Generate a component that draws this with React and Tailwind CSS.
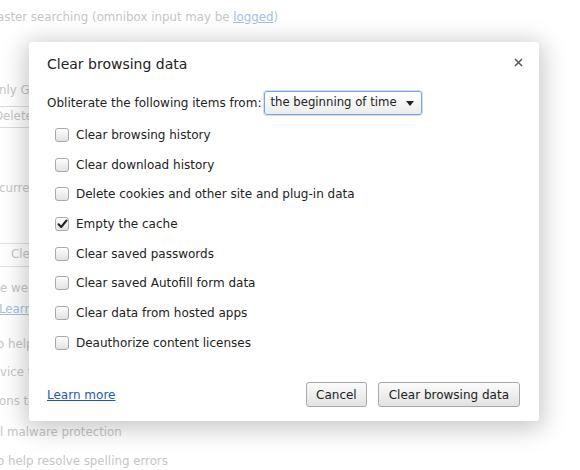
import React from "react";

const font = { fontFamily: '"DejaVu Sans", "Liberation Sans", sans-serif' };

function Checkbox({ checked }) {
  return (
    <span className="relative flex h-[14px] w-[14px] shrink-0 items-center justify-center rounded-[3px] border border-[#a9a9a9] bg-gradient-to-b from-[#fdfdfd] to-[#e2e2e2] shadow-[inset_0_1px_0_#fff]">
      {checked && (
        <svg width="11" height="10" viewBox="0 0 11 10" className="absolute left-[1px] top-[1px]">
          <path d="M1.5 5.2 L4.2 8 L9.5 1.5" fill="none" stroke="#222" strokeWidth="2" strokeLinecap="round" strokeLinejoin="round" />
        </svg>
      )}
    </span>
  );
}

const items = [
  ["Clear browsing history", false],
  ["Clear download history", false],
  ["Delete cookies and other site and plug-in data", false],
  ["Empty the cache", true],
  ["Clear saved passwords", false],
  ["Clear saved Autofill form data", false],
  ["Clear data from hosted apps", false],
  ["Deauthorize content licenses", false],
];

function BgLine({ children, className = "" }) {
  return <div className={"h-[20px] leading-[20px] whitespace-nowrap " + className}>{children}</div>;
}

export default function App() {
  return (
    <div className="relative h-[470px] w-[580px] overflow-hidden bg-white text-[12px] text-[#c5c5c5]" style={font}>
      {/* background settings page */}
      <div className="flex flex-col text-[11.8px]">
        <BgLine className="mt-[7px] ml-[-3px]">
          aster searching (omnibox input may be <span className="text-[#a7bde6] underline">logged</span>)
        </BgLine>
        <BgLine className="mt-[53px] ml-[-1px]">nly Google</BgLine>
        <div className="mt-[6px] ml-[-20px] flex h-[22px] w-[90px] items-center rounded-[3px] border border-[#dcdcdc] pl-[13px]">
          Delete
        </div>
        <BgLine className="mt-[50px] ml-[-1px]">current</BgLine>
        <div className="mt-[45px] ml-[-2px] flex h-[24px] w-[80px] items-center rounded-[3px] border border-[#e0e0e0] pl-[12px]">
          Clear
        </div>
        <BgLine className="mt-[11px] ml-[0px]">e web</BgLine>
        <BgLine className="mt-[1px] ml-[-1px] text-[#a7bde6] underline">Learn more</BgLine>
        <BgLine className="mt-[15px] ml-[-3px]">o help</BgLine>
        <BgLine className="mt-[8px] ml-[0px]">vice to</BgLine>
        <BgLine className="mt-[9px] ml-[-1px]">ons to</BgLine>
        <BgLine className="mt-[11px] ml-[0px]">l malware protection</BgLine>
        <BgLine className="mt-[9px] ml-[-3px]">o help resolve spelling errors</BgLine>
      </div>

      {/* dialog */}
      <div className="absolute left-[29px] top-[42px] flex h-[379px] w-[510px] flex-col rounded-[3px] bg-white pl-[18px] pr-[19px] pt-[12px] pb-[14px] text-[#222] shadow-[0_4px_24px_4px_rgba(0,0,0,0.22)]">
        <div className="flex h-[20px] items-center justify-between">
          <div className="text-[14px] leading-[20px] text-[#222]">Clear browsing data</div>
          <svg width="9" height="9" viewBox="0 0 9 9" className="mr-[-3px] mt-[-4px]">
            <path d="M1 1 L8 8 M8 1 L1 8" stroke="#555" strokeWidth="1.5" />
          </svg>
        </div>
        <div className="mt-[17px] flex items-center gap-[3px]">
          <span className="leading-[20px]">Obliterate the following items from:</span>
          <div className="flex h-[24px] w-[158px] items-center justify-between rounded-[3px] border border-[#78a4e4] bg-gradient-to-b from-[#ffffff] to-[#ececec] pl-[5px] pr-[7px] shadow-[0_0_0_1px_rgba(120,164,228,0.35)]">
            <span className="text-[11.7px]">the beginning of time</span>
            <svg width="8" height="5" viewBox="0 0 8 5">
              <path d="M0 0 H8 L4 5 Z" fill="#222" />
            </svg>
          </div>
        </div>
        <div className="mt-[5px] flex flex-col">
          {items.map(([label, checked]) => (
            <div key={label} className="flex h-[29.7px] items-center gap-[7px] pl-[8px]">
              <Checkbox checked={checked} />
              <span>{label}</span>
            </div>
          ))}
        </div>
        <div className="mt-auto flex items-center">
          <span className="text-[#1a56cf] underline">Learn more</span>
          <div className="ml-auto flex gap-[11px]">
            <button className="h-[25px] rounded-[3px] border border-[#a8a8a8] bg-gradient-to-b from-[#fbfbfb] to-[#e2e2e2] px-[9px] text-[12px] text-[#222]" style={font}>
              Cancel
            </button>
            <button className="h-[25px] rounded-[3px] border border-[#a8a8a8] bg-gradient-to-b from-[#fbfbfb] to-[#e2e2e2] px-[10px] text-[12px] text-[#222]" style={font}>
              Clear browsing data
            </button>
          </div>
        </div>
      </div>
    </div>
  );
}
